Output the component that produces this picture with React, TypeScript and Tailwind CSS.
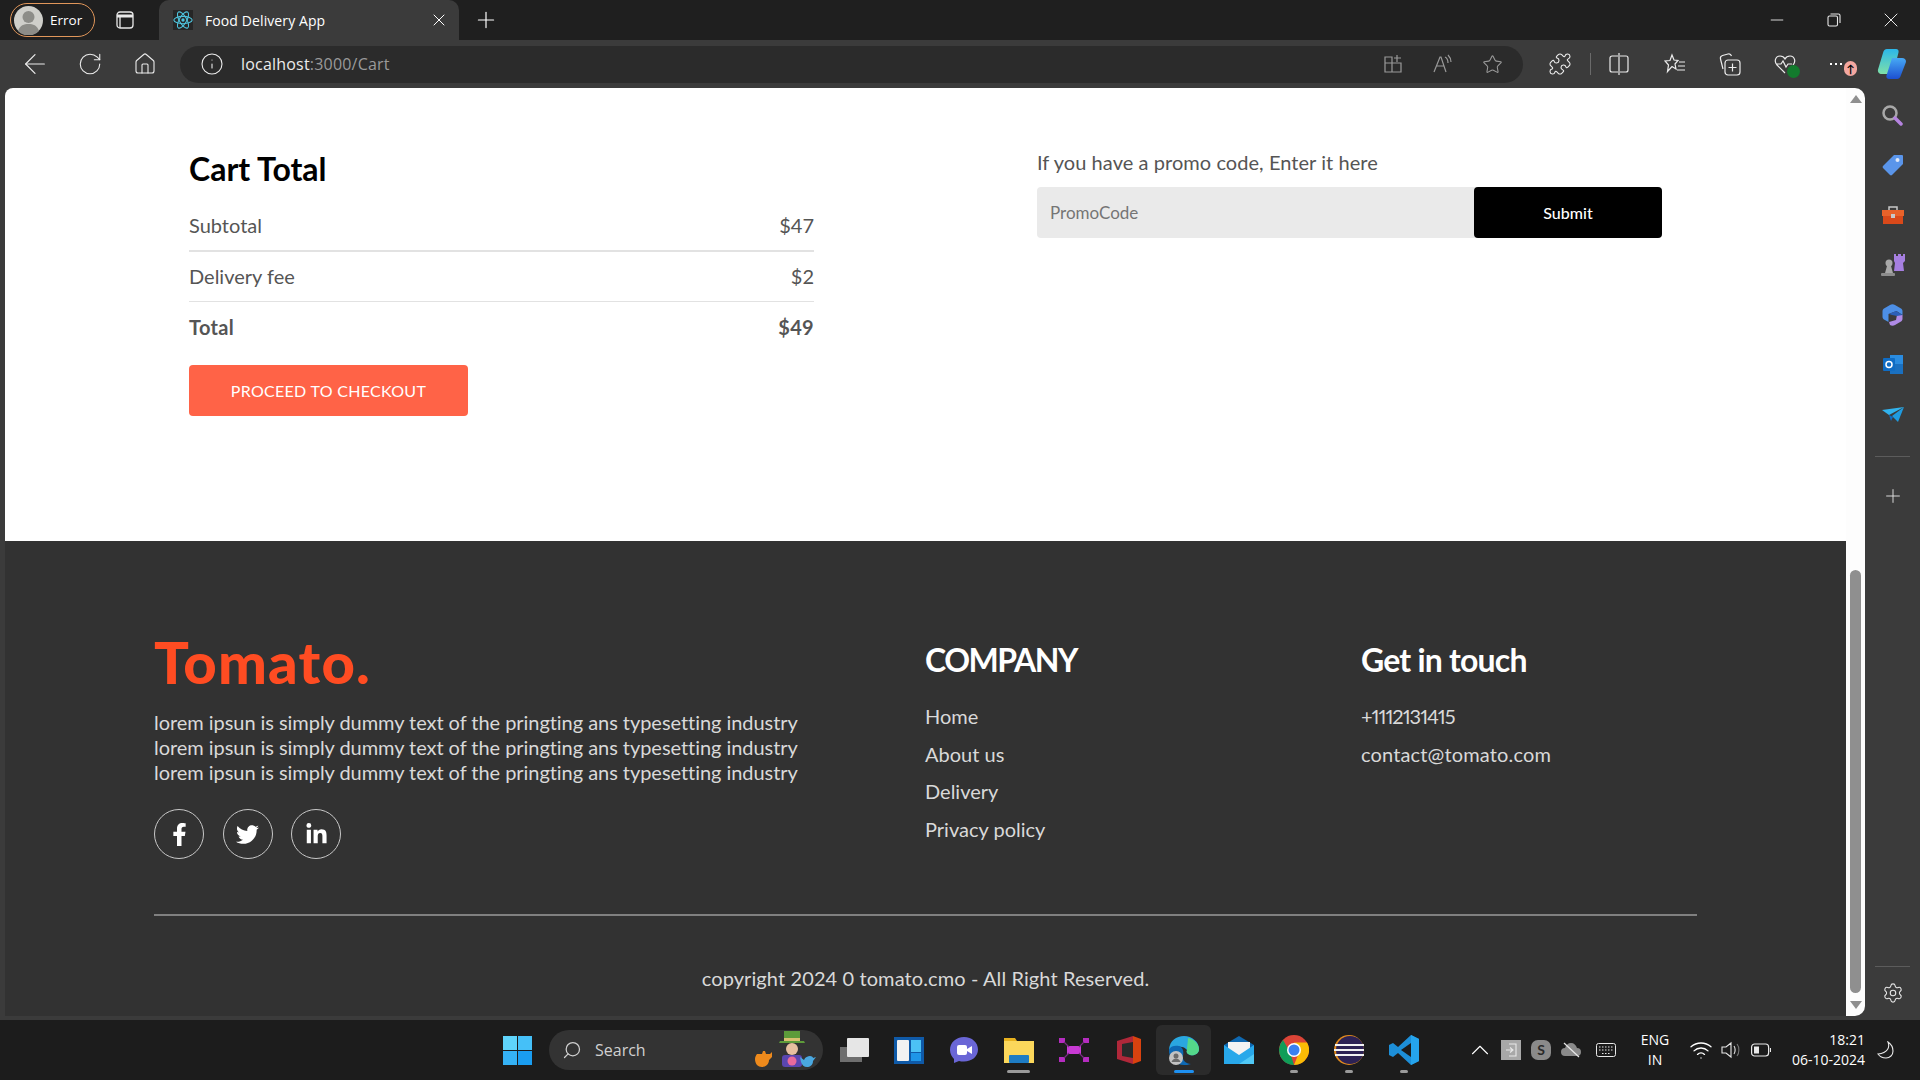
import {
  ArrowLeft,
  ChevronUp,
  Home,
  Info,
  Minus,
  Plus,
  Puzzle,
  RotateCw,
  Search,
  Settings,
  Star,
  Wifi,
  X,
} from "lucide-react";
import { FaFacebookF, FaLinkedinIn, FaTwitter } from "react-icons/fa";

const footerLinks = ["Home", "About us", "Delivery", "Privacy policy"];

function ReactLogo() {
  return (
    <svg width="20" height="20" viewBox="0 0 24 24" fill="none" stroke="#4fc3dc" strokeWidth="1.3">
      <ellipse cx="12" cy="12" rx="11" ry="4.4" />
      <ellipse cx="12" cy="12" rx="11" ry="4.4" transform="rotate(60 12 12)" />
      <ellipse cx="12" cy="12" rx="11" ry="4.4" transform="rotate(120 12 12)" />
      <circle cx="12" cy="12" r="2" fill="#4fc3dc" stroke="none" />
    </svg>
  );
}

function Avatar() {
  return (
    <svg width="29" height="29" viewBox="0 0 29 29">
      <circle cx="14.5" cy="14.5" r="14.5" fill="#cfcfca" />
      <circle cx="14.5" cy="11" r="6" fill="#8d8d88" />
      <path d="M4 25c2-6 6-7 10.500-7s8.500 1 10.500 7a14.500 14.500 0 0 1-21 0z" fill="#8d8d88" />
    </svg>
  );
}

function TitleBar() {
  return (
    <div className="flex h-[40px] items-center bg-[#1f1f1f] font-['Open_Sans',sans-serif] text-white">
      <div className="ml-[10px] flex h-[34px] w-[85px] items-center gap-[7px] rounded-full border border-[#e0965a] pl-[3px] text-[13.500px]">
        <Avatar />
        <span>Error</span>
      </div>
      <div className="flex w-[64px] justify-center pr-[4px]">
        <svg width="18" height="18" viewBox="0 0 18 18" fill="none" stroke="#e8e8e8" strokeWidth="1.300">
          <rect x="1" y="1" width="16" height="16" rx="3" />
          <path d="M1 5h16" strokeWidth="3" />
          <path d="M4 5v12" />
        </svg>
      </div>
      <div className="flex h-[40px] w-[300px] items-center rounded-t-[10px] bg-[#3b3b3b] pl-[14px] pr-[10px] text-[14px] tracking-[0.1px]">
        <div className="flex h-[20px] w-[20px] items-center justify-center bg-[#262626]">
          <ReactLogo />
        </div>
        <span className="ml-[12px] flex-1">Food Delivery App</span>
        <X size={20} strokeWidth={1.200} />
      </div>
      <div className="flex w-[54px] justify-center">
        <Plus size={26} strokeWidth={1.100} />
      </div>
      <div className="flex flex-1 items-center justify-end text-[#e8e8e8]">
        <div className="flex w-[57px] justify-center">
          <Minus size={20} strokeWidth={1.100} />
        </div>
        <div className="flex w-[57px] justify-center">
          <svg width="14" height="14" viewBox="0 0 14 14" fill="none" stroke="currentColor" strokeWidth="1.100">
            <rect x="1" y="3" width="9.500" height="10" rx="1.500" />
            <path d="M3.500 1h8a1.500 1.500 0 0 1 1.500 1.500V10" />
          </svg>
        </div>
        <div className="flex w-[58px] justify-center">
          <X size={24} strokeWidth={1} />
        </div>
      </div>
    </div>
  );
}

function Copilot() {
  return (
    <svg width="30" height="32" viewBox="0 0 30 32">
      <defs>
        <linearGradient id="cpa" x1="0" y1="0" x2="0" y2="1">
          <stop offset="0" stopColor="#2bb7ea" />
          <stop offset="1" stopColor="#7fe0a8" />
        </linearGradient>
        <linearGradient id="cpb" x1="0" y1="0" x2="0" y2="1">
          <stop offset="0" stopColor="#47a9f5" />
          <stop offset="1" stopColor="#1c4fd0" />
        </linearGradient>
      </defs>
      <path d="M11 1h9c2 0 3 1.500 2.500 3.500L17 26H6c-3 0-4.500-2-4-4.500L7 5c.6-2.500 2-4 4-4z" fill="url(#cpa)" />
      <path d="M13 31c-2 0-3-1.500-2.500-3.500L16 10h10c3 0 4.500 2 3.800 4.500L25 27c-.8 2.500-2 4-4 4z" fill="url(#cpb)" />
    </svg>
  );
}

function ToolBar() {
  const grey = "#9a9a9a";
  return (
    <div className="flex h-[48px] items-center bg-[#3b3b3b] text-[#ececec]">
      <div className="flex w-[180px] items-center pl-[11px]">
        <div className="flex w-[48px] justify-center">
          <ArrowLeft size={32} strokeWidth={0.900} />
        </div>
        <div className="ml-[7px] flex w-[48px] justify-center">
          <RotateCw size={26} strokeWidth={1} />
        </div>
        <div className="ml-[7px] flex w-[48px] justify-center">
          <Home size={24} strokeWidth={1.100} />
        </div>
      </div>
      <div className="flex h-[37px] w-[1343px] items-center rounded-full bg-[#2b2b2b] pl-[20px] pr-[20px]">
        <Info size={24} strokeWidth={1.100} />
        <span className="ml-[17px] flex-1 font-['Open_Sans',sans-serif] text-[16px] tracking-[0.2px]">
          localhost<span className="text-[#9a9a9a]">:3000/Cart</span>
        </span>
        <svg width="20" height="20" viewBox="0 0 20 20" fill="none" stroke={grey} strokeWidth="1.200">
          <path d="M2 9V3h7v15H2V9h16v9H9M14 1v7M11 4h7" />
        </svg>
        <svg className="ml-[30px]" width="20" height="20" viewBox="0 0 20 20" fill="none" stroke={grey} strokeWidth="1.200">
          <path d="M1 18 7 3h1l5 15M3.500 12h7M12 3c2 1 3 3 3 6M15 1c2 2 3 4 3 7" />
        </svg>
        <Star className="ml-[29px]" size={21} strokeWidth={1.200} color={grey} />
      </div>
      <div className="flex flex-1 items-center">
        <div className="ml-[25px] flex w-[24px] justify-center">
          <Puzzle size={24} strokeWidth={1.100} />
        </div>
        <div className="ml-[18px] h-[22px] w-px bg-[#6a6a6a]" />
        <svg className="ml-[18px]" width="20" height="22" viewBox="0 0 20 22" fill="none" stroke="currentColor" strokeWidth="1.200">
          <path d="M9 3H3a2 2 0 0 0-2 2v12a2 2 0 0 0 2 2h6M11 3h6a2 2 0 0 1 2 2v12a2 2 0 0 1-2 2h-6M10 0v22" />
        </svg>
        <svg className="ml-[35px]" width="22" height="22" viewBox="0 0 22 22" fill="none" stroke="currentColor" strokeWidth="1.200">
          <path d="m8 2 2 5 4 .5-3 3.500 1 5-4-2.500-4.500 5 1-6.500L1 8l5-.5zM15 9h6M14 13h7M13 17h8" />
        </svg>
        <svg className="ml-[33px]" width="22" height="24" viewBox="0 0 22 24" fill="none" stroke="currentColor" strokeWidth="1.200">
          <path d="M4 17 1.500 7c-.5-2 .5-3 2-3.500L9 2c2-.5 3 .5 3.500 2" />
          <rect x="6" y="8" width="15" height="15" rx="3" />
          <path d="M13.500 11.500v8M9.500 15.500h8" />
        </svg>
        <div className="relative ml-[32px] flex h-[24px] w-[24px] items-center justify-center">
          <svg width="22" height="22" viewBox="0 0 22 22" fill="none" stroke="currentColor" strokeWidth="1.200">
            <path d="M11 20 3 12C0 9 1 3 6 3c2 0 4 1 5 3 1-2 3-3 5-3 5 0 6 6 3 9M2 11h5l2-3 3 6 2-3h4" />
          </svg>
          <div className="absolute bottom-[-2px] right-[-3px] h-[13px] w-[13px] rounded-full bg-[#137a2d]" />
        </div>
        <div className="relative ml-[33px] flex w-[20px] items-center gap-[3px]">
          <span className="h-[2px] w-[2px] bg-white" />
          <span className="h-[2px] w-[2px] bg-white" />
          <span className="h-[2px] w-[2px] bg-white" />
          <span className="absolute left-[14px] top-[-2px] flex h-[15px] w-[13px] items-center justify-center rounded-full bg-[#f4a7a0] text-[11px] font-bold leading-none text-black">
            ↑
          </span>
        </div>
        <div className="ml-[26px]">
          <Copilot />
        </div>
      </div>
    </div>
  );
}

function PriceRow({ label, value, bold, line }: { label: string; value: string; bold?: boolean; line?: string }) {
  return (
    <>
      <div className={`flex justify-between text-[20px] leading-[24px] text-[#555] ${bold ? "font-bold tracking-[0.3px]" : ""}`}>
        <span>{label}</span>
        <span>{value}</span>
      </div>
      {line && <hr className={`mt-[13px] border-0 bg-[#e2e2e2] ${line}`} />}
    </>
  );
}

function CartSection() {
  return (
    <section className="grid h-[453px] grid-cols-[625px_625px] gap-x-[223px] bg-white pl-[184px]">
      <div className="pt-[61px]">
        <h2 className="text-[32px] font-bold leading-[40px] text-black">Cart Total</h2>
        <div className="mt-[24px]">
          <PriceRow label="Subtotal" value="$47" line="mb-[12px] h-[2px]" />
          <PriceRow label="Delivery fee" value="$2" line="mb-[13px] h-px" />
          <PriceRow label="Total" value="$49" bold />
        </div>
        <button className="mt-[26px] h-[51px] w-[279px] rounded-[4px] bg-[#ff6347] text-[16px] tracking-[0.3px] text-white">
          PROCEED TO CHECKOUT
        </button>
      </div>
      <div className="pt-[62px]">
        <p className="text-[20px] leading-[24px] tracking-[0.06px] text-[#555]">If you have a promo code, Enter it here</p>
        <div className="mt-[13px] flex h-[51px] rounded-[4px] bg-[#eaeaea]">
          <input
            placeholder="PromoCode"
            className="min-w-0 flex-1 bg-transparent pl-[13px] text-[17px] outline-none placeholder:text-[#757575]"
          />
          <button className="w-[188px] rounded-[4px] bg-black text-[16px] font-medium text-white">Submit</button>
        </div>
      </div>
    </section>
  );
}

function SocialIcon({ children }: { children: React.ReactNode }) {
  return (
    <div className="flex h-[50px] w-[50px] items-center justify-center rounded-full border-[1.5px] border-[#c8c8c8] text-[23px] text-white">
      {children}
    </div>
  );
}

function Footer() {
  return (
    <footer className="h-[476px] bg-[#323232] px-[149px] pt-[89px] text-[#d9d9d9]">
      <div className="grid h-[229px] grid-cols-[771px_436px_1fr]">
        <div>
          <h1 className="text-[58px] font-black leading-[64px] tracking-[1.2px] text-[#ff4c22]">Tomato.</h1>
          <p className="mt-[16px] text-[20px] leading-[25px] tracking-[-0.05px]">
            lorem ipsun is simply dummy text of the pringting ans typesetting industry
            <br />
            lorem ipsun is simply dummy text of the pringting ans typesetting industry
            <br />
            lorem ipsun is simply dummy text of the pringting ans typesetting industry
          </p>
          <div className="mt-[24px] flex gap-[18.500px]">
            <SocialIcon>
              <FaFacebookF />
            </SocialIcon>
            <SocialIcon>
              <FaTwitter />
            </SocialIcon>
            <SocialIcon>
              <FaLinkedinIn />
            </SocialIcon>
          </div>
        </div>
        <div className="pt-[10px]">
          <h2 className="text-[32px] font-bold leading-[40px] tracking-[-1.5px] text-white">COMPANY</h2>
          <ul className="mt-[24px] flex flex-col gap-[12.600px] text-[20px] leading-[25px]">
            {footerLinks.map((link) => (
              <li key={link}>{link}</li>
            ))}
          </ul>
        </div>
        <div className="pt-[10px]">
          <h2 className="text-[32px] font-bold leading-[40px] tracking-[-0.8px] text-white">Get in touch</h2>
          <ul className="mt-[24px] flex flex-col gap-[12.600px] text-[20px] leading-[25px]">
            <li className="proportional-nums tracking-[-1px]">+1112131415</li>
            <li className="tracking-[0.15px]">contact@tomato.com</li>
          </ul>
        </div>
      </div>
      <hr className="mt-[55px] h-[2px] border-0 bg-[#808080]" />
      <p className="mt-[50px] text-center text-[20px] leading-[25px] tracking-[0.1px]">copyright 2024 0 tomato.cmo - All Right Reserved.</p>
    </footer>
  );
}

function ScrollBar() {
  return (
    <div className="flex h-full w-[19px] flex-col items-center rounded-tr-[10px] rounded-br-[10px] bg-[#fdfdfd]">
      <div className="mt-[7px] h-0 w-0 border-x-[6px] border-b-[8px] border-x-transparent border-b-[#8f8f8f]" />
      <div className="mt-[467px] h-[423px] w-[11px] rounded-full bg-[#8f8f8f]" />
      <div className="mt-[8px] h-0 w-0 border-x-[6px] border-t-[8px] border-x-transparent border-t-[#8f8f8f]" />
    </div>
  );
}

function SideBar() {
  return (
    <aside className="flex w-[55px] flex-col items-center pt-[2px] text-[#e6e6e6]">
      <div className="flex h-[50px] items-center pr-[2px]">
        <svg width="22" height="22" viewBox="0 0 22 22" fill="none">
          <circle cx="9" cy="9" r="6.500" stroke="#a8a8a8" strokeWidth="2.500" />
          <path d="m14 14 6 6" stroke="#b583e0" strokeWidth="3.500" strokeLinecap="round" />
        </svg>
      </div>
      <div className="flex h-[50px] items-center">
        <svg width="22" height="22" viewBox="0 0 22 22">
          <path d="M12 1h8a1 1 0 0 1 1 1v8L10 21a1.500 1.500 0 0 1-2 0L1 14a1.500 1.500 0 0 1 0-2z" fill="#5a95ea" />
          <circle cx="15.500" cy="6" r="2" fill="#dfe8f7" />
        </svg>
      </div>
      <div className="flex h-[50px] items-center">
        <svg width="22" height="20" viewBox="0 0 22 20">
          <path d="M7 5V2h8v3" fill="none" stroke="#c8c8c8" strokeWidth="1.500" />
          <rect x="0" y="5" width="22" height="6" fill="#e8622a" />
          <rect x="1" y="11" width="20" height="8" fill="#d9491a" />
          <rect x="9" y="9" width="4" height="4" fill="#c8c8c8" />
        </svg>
      </div>
      <div className="flex h-[50px] items-center">
        <svg width="24" height="24" viewBox="0 0 24 24">
          <path d="M13 1h2v2h2V1h3v2h2V1h2v7l-2 2 1 8H13l1-8-1-2z" fill="#a67fe0" />
          <circle cx="8" cy="10" r="3.500" fill="#a8a8a8" />
          <path d="M6 13h4l2 7H4z" fill="#a8a8a8" />
          <rect x="0" y="20" width="14" height="3" rx="1" fill="#8c8c8c" />
        </svg>
      </div>
      <div className="flex h-[50px] items-center">
        <svg width="21" height="22" viewBox="0 0 21 22">
          <path d="M8 1c1.500-1 3.500-1 5 0l6 3.500c1 .6 1.500 1.500 1.500 3V11l-6-4-8 3v8L2 15.500c-1-.7-1.500-1.500-1.500-3v-5c0-1.500.5-2.400 1.500-3z" fill="#4d8fe6" />
          <path d="M20.500 11v3.500c0 1.500-.5 2.400-1.500 3L13 21c-1.500 1-3.500 1-5 0l-1-3 7-2 1-5z" fill="#b08be6" />
          <path d="M7 10l7-3 6.500 4-5.500 1-5-1z" fill="#2b5fb8" />
        </svg>
      </div>
      <div className="flex h-[50px] items-center">
        <svg width="20" height="20" viewBox="0 0 20 20">
          <rect x="7" y="0" width="13" height="10" fill="#2a8ce0" />
          <rect x="7" y="9" width="13" height="10" fill="#1a70c0" />
          <rect x="0" y="3" width="12" height="13" rx="1" fill="#0f6cc4" />
          <circle cx="6" cy="9.500" r="3" fill="none" stroke="#fff" strokeWidth="1.500" />
        </svg>
      </div>
      <div className="flex h-[50px] items-center">
        <svg width="22" height="16" viewBox="0 0 22 16">
          <path d="M0 3 22 0 7 8z" fill="#31b3ee" />
          <path d="M22 0 16 15 10 9z" fill="#1f9be0" />
          <path d="M7 8l2 6 2-4z" fill="#0f6cc4" />
        </svg>
      </div>
      <div className="mt-[16px] h-px w-[35px] bg-[#5c5c5c]" />
      <div className="flex h-[80px] items-center pb-[2px]">
        <Plus size={22} strokeWidth={1} />
      </div>
      <div className="mt-[429px] h-px w-[35px] bg-[#5c5c5c]" />
      <div className="mt-[15px]">
        <Settings size={22} strokeWidth={1.200} />
      </div>
    </aside>
  );
}

function TaskApp({ children, bar, active }: { children: React.ReactNode; bar?: string; active?: boolean }) {
  return (
    <div className={`relative flex h-[50px] w-[55px] items-center justify-center rounded-[6px] ${active ? "bg-[#2b2b2b]" : ""}`}>
      {children}
      {bar && <span className={`absolute bottom-[2px] h-[3px] rounded-full ${bar}`} />}
    </div>
  );
}

function TaskBar() {
  return (
    <div className="flex h-[60px] items-center bg-[#1c1c1c] text-white">
      <div className="ml-[503px] grid h-[29px] w-[29px] grid-cols-2 gap-[1px]">
        <span className="bg-[#5fd4fb]" />
        <span className="bg-[#45c0f8]" />
        <span className="bg-[#35b2f5]" />
        <span className="bg-[#1a9df0]" />
      </div>
      <div className="ml-[17px] flex h-[40px] w-[274px] items-center rounded-full bg-[#333] pl-[13px] text-[16px] text-[#d0d0d0]">
        <Search size={20} strokeWidth={1.500} className="-scale-x-100" />
        <span className="ml-[13px] font-['Open_Sans',sans-serif]">Search</span>
        <span className="ml-[108px] flex items-end">
          <svg width="62" height="40" viewBox="0 0 62 40">
            <path d="M3 24h5l1-3 2 0 1 3h4l2-2v5l-3 3c0 4-3 7-7 7s-7-3-7-8c0-2 1-4 2-5z" fill="#ee8a1c" />
            <path d="M26 11h24l1 2H25z" fill="#5d9b3a" />
            <rect x="30" y="1" width="16" height="10" fill="#5d9b3a" />
            <rect x="30" y="8" width="16" height="3" fill="#d8c070" />
            <circle cx="38" cy="19" r="6" fill="#e8c0a0" />
            <rect x="28" y="25" width="20" height="12" rx="3" fill="#5a46b0" />
            <circle cx="38" cy="31" r="4.500" fill="#e86a9c" />
            <path d="M46 27l4 3c1-3 4-4 6-4s3 1 3 2l3-1-3 4c0 4-3 6-6 6s-5-2-6-5z" fill="#4aa8e0" />
          </svg>
        </span>
      </div>
      <div className="ml-[3px] flex">
        <TaskApp>
          <svg width="30" height="26" viewBox="0 0 30 26">
            <rect x="1" y="10" width="22" height="15" fill="#6e6e6e" />
            <rect x="8" y="1" width="22" height="19" rx="1" fill="#e6e6e6" />
          </svg>
        </TaskApp>
        <TaskApp>
          <svg width="30" height="27" viewBox="0 0 30 27">
            <rect width="30" height="27" fill="#0f5aa8" />
            <rect x="3" y="3" width="12" height="21" rx="1" fill="#f2f2f2" />
            <rect x="17" y="3" width="10" height="12" fill="#4cc2f5" />
            <rect x="17" y="16" width="10" height="8" fill="#1e96e8" />
          </svg>
        </TaskApp>
        <TaskApp>
          <svg width="30" height="28" viewBox="0 0 30 28">
            <path d="M15 1C7 1 1 6.500 1 14c0 4 2 7 4 9v4l5-2c1.500.5 3 .5 5 .5 8 0 14-5 14-12S23 1 15 1z" fill="#6a66d6" />
            <rect x="8" y="9" width="10" height="10" rx="2" fill="#fff" />
            <path d="m18 13 5-3v8l-5-3z" fill="#fff" />
          </svg>
        </TaskApp>
        <TaskApp bar="w-[23px] bg-[#9a9a9a]">
          <svg width="30" height="28" viewBox="0 0 30 28">
            <path d="M0 2h11l2 3h17v22H0z" fill="#e8b21f" />
            <rect y="5" width="30" height="22" fill="#fbd75b" />
            <rect x="5" y="19" width="20" height="8" rx="1" fill="#1e7cc4" />
          </svg>
        </TaskApp>
        <TaskApp>
          <svg width="30" height="26" viewBox="0 0 30 26" fill="#b52cc0">
            <rect x="0" y="1" width="6" height="5" />
            <rect x="24" y="1" width="6" height="5" />
            <rect x="0" y="20" width="6" height="5" />
            <rect x="24" y="20" width="6" height="5" />
            <rect x="8" y="9" width="14" height="8" fill="#c83ad4" />
            <path d="m5 5 5 5M25 5l-5 5M5 21l5-5M25 21l-5-5" fill="none" stroke="#7a2c84" strokeWidth="1.200" />
          </svg>
        </TaskApp>
        <TaskApp>
          <svg width="24" height="28" viewBox="0 0 24 28">
            <path d="M0 5 16 0v28L0 23z" fill="#b0283a" />
            <path d="M16 0 24 3v22l-8 3z" fill="#d9420f" />
            <path d="M5 8v12l11 2V6z" fill="#2a2a2a" />
          </svg>
        </TaskApp>
        <TaskApp active bar="w-[20px] bg-[#1e90f0]">
          <svg width="32" height="30" viewBox="0 0 32 30">
            <path d="M1 14C2 6 8 1 16 1c8 0 15 6 15 13 0 5-5 7-9 6-3-1-4-3-3-5-2-3-6-4-10-3-4 1-7 3-8 2z" fill="#2aa7e0" />
            <path d="M20 3c6 1 11 6 11 11 0 5-5 7-9 6-3-1-4-3-3-5 0-5 1-8 1-12z" fill="#54d88a" />
            <path d="M1 14c2-3 6-4 10-3s5 6 4 10 3 8 8 8c-3 1-5 1-7 1C8 30 0 23 1 14z" fill="#0e69b4" />
            <circle cx="8" cy="23" r="7" fill="#c2c2c2" />
            <circle cx="8" cy="21" r="2.500" fill="#6a6a6a" />
            <path d="M3.500 27c1-3 3-3.500 4.500-3.500s3.500.5 4.500 3.500z" fill="#6a6a6a" />
          </svg>
        </TaskApp>
        <TaskApp>
          <svg width="30" height="28" viewBox="0 0 30 28">
            <path d="M15 0 30 9v19H0V9z" fill="#0f68b0" />
            <path d="M4 6h22v8l-11 7-11-7z" fill="#f3f3f3" />
            <path d="M0 9l15 10L30 9v19H0z" fill="#28a8ea" />
            <path d="M30 9v19H15l15-10z" fill="#50c8f5" />
          </svg>
        </TaskApp>
        <TaskApp bar="w-[8px] bg-[#9a9a9a]">
          <svg width="30" height="30" viewBox="0 0 30 30">
            <circle cx="15" cy="15" r="15" fill="#db4437" />
            <path d="M2 22.500A15 15 0 0 1 4 5l7 12 4 13A15 15 0 0 1 2 22.500z" fill="#0f9d58" />
            <path d="M15 30a15 15 0 0 0 13-22.500H15l5 10z" fill="#fbbc05" />
            <circle cx="15" cy="15" r="7" fill="#fff" />
            <circle cx="15" cy="15" r="5.500" fill="#3a80f0" />
          </svg>
        </TaskApp>
        <TaskApp bar="w-[8px] bg-[#9a9a9a]">
          <svg width="30" height="30" viewBox="0 0 30 30">
            <circle cx="15" cy="15" r="15" fill="#e08a1e" />
            <circle cx="16" cy="15" r="14" fill="#2c2255" />
            <path d="M1 10h29M0 15h30M1 20h29" stroke="#f2f2f2" strokeWidth="2" />
          </svg>
        </TaskApp>
        <TaskApp bar="w-[8px] bg-[#9a9a9a]">
          <svg width="30" height="30" viewBox="0 0 30 30">
            <path d="M22 0 30 4v22l-8 4-13-12-5 4-4-2V10l4-2 5 4z" fill="#1d8fd8" />
            <path d="M22 8 12 15l10 7z" fill="#1c1c1c" />
            <path d="M22 0 30 4v22l-8 4z" fill="#25a4ec" />
          </svg>
        </TaskApp>
      </div>
      <div className="flex flex-1 items-center">
        <ChevronUp className="ml-[34px]" size={30} strokeWidth={0.900} />
        <div className="ml-[6px] flex h-[20px] w-[20px] items-center justify-center bg-[#a8a8a8]">
          <svg width="12" height="14" viewBox="0 0 12 14" fill="none" stroke="#e8e8e8" strokeWidth="1.100">
            <path d="M4 1h7v12H4M1 7h7M5 4.500 8 7l-3 2.500" />
          </svg>
        </div>
        <div className="ml-[10px] flex h-[20px] w-[20px] items-center justify-center rounded-[7px] bg-[#8a8a8a] text-[14px] font-bold leading-none text-[#2a2a2a]">
          S
        </div>
        <svg className="ml-[10px]" width="20" height="16" viewBox="0 0 20 16">
          <path d="M4 14a4 4 0 0 1 0-8c1-3 3-5 6-5s5 2 6 5a4 4 0 0 1 0 8z" fill="#8a8a8a" />
          <path d="M3 1 18 15" stroke="#e8e8e8" strokeWidth="1.200" />
        </svg>
        <svg className="ml-[15px]" width="20" height="14" viewBox="0 0 20 14" fill="none" stroke="#e8e8e8">
          <rect x=".5" y=".5" width="19" height="13" rx="2" />
          <path d="M3 4h14M3 7h14M6 10.500h8" strokeDasharray="1.500 1.500" />
        </svg>
        <div className="ml-[22px] w-[34px] text-center font-['Open_Sans',sans-serif] text-[14px] leading-[20px]">
          ENG
          <br />
          IN
        </div>
        <Wifi className="ml-[17px]" size={24} strokeWidth={1.300} />
        <svg className="ml-[8px]" width="20" height="18" viewBox="0 0 20 18" fill="none" stroke="#e8e8e8" strokeWidth="1.100">
          <path d="M1 6h4l5-4v14l-5-4H1zM13 5c1.500 2 1.500 6 0 8" />
          <path d="M16 3c2.500 3 2.500 9 0 12" stroke="#777" />
        </svg>
        <svg className="ml-[10px]" width="20" height="14" viewBox="0 0 20 14" fill="none" stroke="#e8e8e8" strokeWidth="1.200">
          <rect x=".6" y="1" width="17" height="12" rx="3" />
          <rect x="3" y="3.500" width="5" height="7" fill="#e8e8e8" stroke="none" />
          <path d="M19.500 5v4" />
        </svg>
        <div className="ml-[14px] w-[80px] text-right font-['Open_Sans',sans-serif] text-[14px] leading-[20px]">
          18:21
          <br />
          06-10-2024
        </div>
        <svg className="ml-[12px]" width="18" height="18" viewBox="0 0 18 18" fill="none" stroke="#e8e8e8" strokeWidth="1.100">
          <path d="M11 1c2 5 0 11-10 12 2 3 5 4 8 4 4 0 7-3 7-7 0-4-2-7-5-9z" />
        </svg>
      </div>
    </div>
  );
}

export default function App() {
  return (
    <div className="flex h-screen w-screen flex-col overflow-hidden bg-[#3b3b3b] font-['Lato',sans-serif]">
      <TitleBar />
      <ToolBar />
      <div className="flex h-[932px]">
        <div className="ml-[5px] h-[928px] w-[1841px] overflow-hidden rounded-tl-[8px]">
          <CartSection />
          <Footer />
        </div>
        <div className="h-[928px]">
          <ScrollBar />
        </div>
        <SideBar />
      </div>
      <TaskBar />
    </div>
  );
}
